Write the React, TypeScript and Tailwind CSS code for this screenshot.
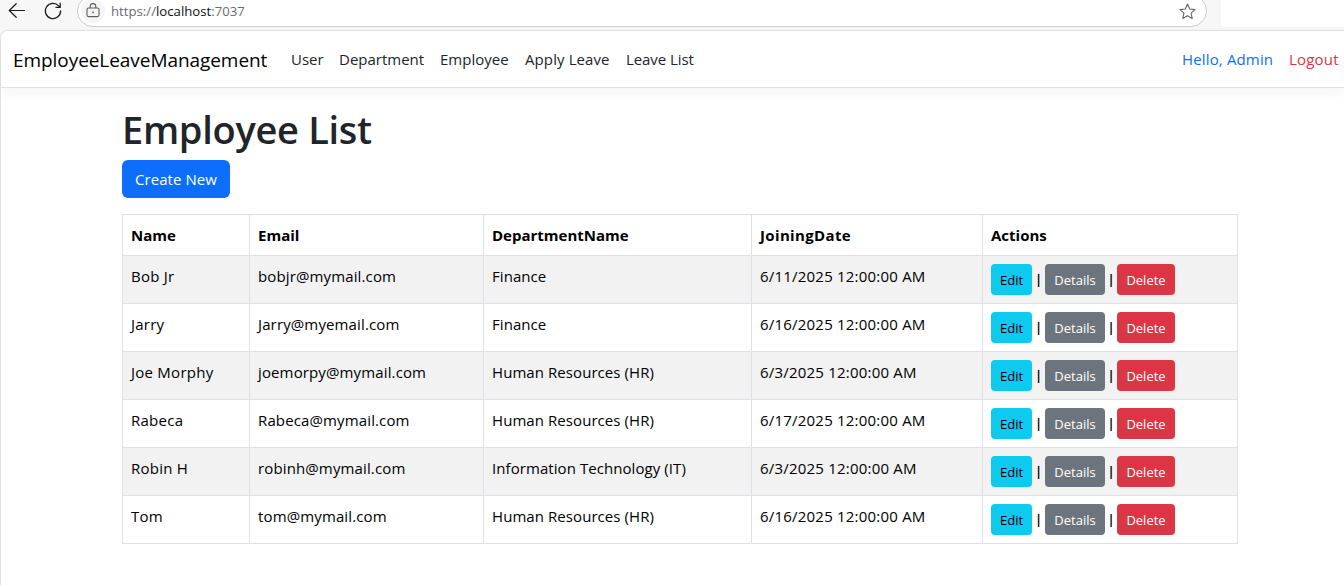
import type { ReactNode } from 'react';

type Employee = { name: string; email: string; department: string; joined: string };

const employees: Employee[] = [
  { name: 'Bob Jr', email: 'bobjr@mymail.com', department: 'Finance', joined: '6/11/2025 12:00:00 AM' },
  { name: 'Jarry', email: 'Jarry@myemail.com', department: 'Finance', joined: '6/16/2025 12:00:00 AM' },
  { name: 'Joe Morphy', email: 'joemorpy@mymail.com', department: 'Human Resources (HR)', joined: '6/3/2025 12:00:00 AM' },
  { name: 'Rabeca', email: 'Rabeca@mymail.com', department: 'Human Resources (HR)', joined: '6/17/2025 12:00:00 AM' },
  { name: 'Robin H', email: 'robinh@mymail.com', department: 'Information Technology (IT)', joined: '6/3/2025 12:00:00 AM' },
  { name: 'Tom', email: 'tom@mymail.com', department: 'Human Resources (HR)', joined: '6/16/2025 12:00:00 AM' },
];

function BrowserBar() {
  return (
    <div className="flex h-[30px] items-start overflow-hidden bg-[#f7f7f7]">
      <svg className="ml-[8px] mt-[2px] h-[17px] w-[18px] shrink-0" viewBox="0 0 18 17" fill="none" stroke="#1b1b1b" strokeWidth="1.2" strokeLinecap="round" strokeLinejoin="round">
        <path d="M16.5 8.5H1.3M8.2 1.700L1.3 8.5l6.900 6.800" />
      </svg>
      <svg className="ml-[18px] mt-[2px] h-[18px] w-[18px] shrink-0" viewBox="0 0 18 18" fill="none" stroke="#1b1b1b" strokeWidth="1.3" strokeLinecap="round" strokeLinejoin="round">
        <path d="M16.600 9A7.600 7.600 0 1 1 14.600 3.850L16.200 5.400M16.200 1.200V5.400H12" />
      </svg>
      <div className="-mt-[5px] ml-[15px] flex h-8 w-[1130px] shrink-0 items-center rounded-full border border-[#cdcdcd] bg-white pl-[3px] pr-[10px]">
        <div className="flex size-6 items-center justify-center rounded-full bg-[#f5f5f5]">
          <svg className="-mt-px h-[15px] w-[14px]" viewBox="0 0 14 15" fill="none" stroke="#5f5f5f" strokeWidth="1.1">
            <rect x="1" y="5" width="12" height="8.600" rx="1.600" />
            <path d="M4.200 5V3.400a2.800 2.800 0 0 1 5.600 0V5" />
            <circle cx="7" cy="9.300" r="0.900" fill="#5f5f5f" stroke="none" />
          </svg>
        </div>
        <span className="ml-[6px] text-[13.2px] leading-4 text-[#6b6b6b]">
          https://<span className="text-[#111]">localhost</span>:7037
        </span>
        <svg className="ml-auto size-[17px]" viewBox="0 0 17 17" fill="none" stroke="#666" strokeWidth="1.1" strokeLinejoin="round">
          <path d="M8.500 1.100l2.200 4.900 5.300.6-3.900 3.600 1.100 5.300-4.700-2.700-4.700 2.700 1.100-5.300L1 6.600l5.300-.6z" />
        </svg>
      </div>
      <div className="ml-[14px] h-[27px] grow rounded-bl-[3px] bg-white" />
    </div>
  );
}

function NavLink({ children, className }: { children: ReactNode; className: string }) {
  return (
    <a href="#" className={`shrink-0 whitespace-nowrap text-[15px] leading-6 ${className}`}>
      {children}
    </a>
  );
}

function NavBar() {
  return (
    <header className="flex h-[57px] items-center rounded-tl-[7px] border-b border-[#dee2e6] bg-white pl-3 shadow-[0_4px_12px_rgba(0,0,0,0.05)]">
      <a href="#" className="w-[278px] shrink-0 whitespace-nowrap pt-px text-[19px] leading-[30px] tracking-[-0.06px] text-black">
        EmployeeLeaveManagement
      </a>
      <nav className="flex text-[#212529]">
        <NavLink className="w-[48px]">User</NavLink>
        <NavLink className="w-[101px]">Department</NavLink>
        <NavLink className="w-[85px]">Employee</NavLink>
        <NavLink className="w-[101px] tracking-[0.1px]">Apply Leave</NavLink>
        <NavLink className="w-[68px] tracking-[-0.08px]">Leave List</NavLink>
      </nav>
      <div className="ml-auto flex">
        <NavLink className="w-[107px] tracking-[0.15px] text-[#0d6efd]">Hello, Admin</NavLink>
        <NavLink className="w-[55px] tracking-[0.2px] text-[#dc3545]">Logout</NavLink>
      </div>
    </header>
  );
}

function Separator() {
  return <span className="flex justify-center text-[12px] font-bold leading-4 text-black">|</span>;
}

function Actions() {
  return (
    <div className="grid h-[31px] grid-cols-[41px_13px_60px_12px_58px] items-center text-[13px]">
      <button className="h-[31px] rounded-[4px] bg-[#0dcaf0] text-black">Edit</button>
      <Separator />
      <button className="h-[31px] rounded-[4px] bg-[#6c757d] text-white">Details</button>
      <Separator />
      <button className="h-[31px] rounded-[4px] bg-[#dc3545] text-white">Delete</button>
    </div>
  );
}

const cell = 'border-b border-r border-[#dee2e6] px-2 pt-2 text-left align-top whitespace-nowrap';

export default function App() {
  return (
    <div className="h-[585px] overflow-hidden bg-[#f7f7f7] font-['Open_Sans',sans-serif] text-black">
      <BrowserBar />
      <div className="h-[555px] rounded-tl-[8px] border-l border-t border-[#e3e3e3] bg-white">
        <NavBar />
        <main className="ml-[121px] w-[1116px] pt-[17px]">
          <h1 className="text-[38px] font-semibold leading-[48px] tracking-[-0.3px] text-[#212529]">Employee List</h1>
          <button className="mt-[7px] block h-[38px] w-[108px] rounded-[6px] bg-[#0d6efd] text-[15px] tracking-[0.05px] text-white">Create New</button>
          <table className="mt-4 w-[1116px] table-fixed border-separate border-spacing-0 border-l border-t border-[#dee2e6] text-[15px] leading-6">
            <colgroup>
              <col className="w-[127px]" />
              <col className="w-[234px]" />
              <col className="w-[268px]" />
              <col className="w-[231px]" />
              <col className="w-[255px]" />
            </colgroup>
            <thead>
              <tr className="h-[41px] font-bold">
                <th className={cell}>Name</th>
                <th className={cell}>Email</th>
                <th className={cell}>DepartmentName</th>
                <th className={`${cell} tracking-[0.35px]`}>JoiningDate</th>
                <th className={cell}>Actions</th>
              </tr>
            </thead>
            <tbody>
              {employees.map((e) => (
                <tr key={e.email} className="h-[48px] odd:bg-[#f2f2f2]">
                  <td className={`${cell} tracking-[0.25px]`}>{e.name}</td>
                  <td className={`${cell} tracking-[0.13px]`}>{e.email}</td>
                  <td className={`${cell} tracking-[0.07px]`}>{e.department}</td>
                  <td className={`${cell} tracking-[0.21px]`}>{e.joined}</td>
                  <td className={cell}>
                    <Actions />
                  </td>
                </tr>
              ))}
            </tbody>
          </table>
        </main>
      </div>
    </div>
  );
}
